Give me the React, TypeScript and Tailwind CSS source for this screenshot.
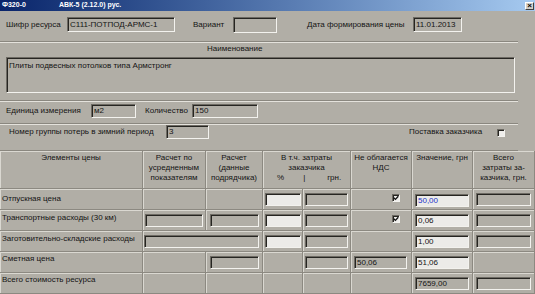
import React from 'react';

const sunken =
  'border border-t-[#6d6a63] border-l-[#6d6a63] border-b-[#f3f2ee] border-r-[#f3f2ee] shadow-[inset_1px_1px_0_#262521]';
const groove = 'w-[518px] border-b border-b-[#8a877f] shadow-[0_1px_0_#e4e2dc]';
const cell = 'border-r border-b border-[#8c8981] shadow-[inset_1px_1px_0_#dad8d1]';

type FieldProps = {
  value?: string;
  white?: boolean;
  blue?: boolean;
  className?: string;
};

function Field({ value = '', white = false, blue = false, className = '' }: FieldProps) {
  return (
    <div
      className={`${sunken} ${white ? 'bg-[#ecebe8]' : 'bg-[#b1aea6]'} ${
        blue ? 'text-[#2433c8]' : 'text-[#141414]'
      } flex items-center pl-[2px] leading-none whitespace-nowrap overflow-hidden ${className}`}
    >
      {value}
    </div>
  );
}

function Check({ checked = false, className = '' }: { checked?: boolean; className?: string }) {
  return (
    <div className={`w-[8px] h-[8px] ${sunken} bg-[#efeeeb] flex items-center justify-center ${className}`}>
      {checked && (
        <svg viewBox="0 0 6 6" className="w-[6px] h-[6px]">
          <path d="M0.8 2.8 L2.4 4.4 L5.3 1.2" stroke="#111" strokeWidth="1.3" fill="none" />
        </svg>
      )}
    </div>
  );
}

function Head({ children, span = false }: { children: React.ReactNode; span?: boolean }) {
  return (
    <div className={`${cell} ${span ? 'col-span-2' : ''} text-center leading-[10px] pt-[2px] whitespace-nowrap`}>
      {children}
    </div>
  );
}

function C({ children, span = false }: { children?: React.ReactNode; span?: boolean }) {
  return <div className={`${cell} ${span ? 'col-span-2' : ''} flex items-start`}>{children}</div>;
}

export default function App() {
  return (
    <div className="w-[535px] h-[294px] overflow-hidden bg-[#b1aea6] text-[#141414] text-[8px] font-['Liberation_Sans',Arial,sans-serif]">
      {/* title bar */}
      <div className="h-[11px] flex items-center bg-linear-to-r from-[#0a246a] to-[#a6caf0] text-white font-bold text-[7px]">
        <span className="ml-[2px]">Ф320-0</span>
        <span className="ml-[33px]">АВК-5 (2.12.0) рус.</span>
        <div className="ml-auto mr-[1px] w-[9px] h-[8px] bg-[#d4d0c8] border border-t-white border-l-white border-b-[#404040] border-r-[#404040] flex items-center justify-center text-black text-[8px] leading-none">
          ×
        </div>
      </div>

      {/* resource code */}
      <div className={`${groove} h-[31px] pt-[6px]`}>
        <div className="flex items-center h-[15px]">
          <span className="ml-[6px] w-[61px]">Шифр ресурса</span>
          <Field value="С111-ПОТПОД-АРМС-1" className="w-[108px] h-[15px]" />
          <span className="ml-[18px] w-[40px]">Вариант</span>
          <Field className="w-[44px] h-[16px]" />
          <span className="ml-[30px] w-[106px]">Дата формирования цены</span>
          <Field value="11.01.2013" className="w-[49px] h-[15px]" />
        </div>
      </div>

      {/* name */}
      <div className={`${groove} h-[59px] pt-[2px]`}>
        <div className="ml-[207px] leading-[10px]">Наименование</div>
        <div className={`${sunken} bg-[#b1aea6] ml-[6px] mt-[3px] w-[509px] h-[36px] pl-[2px] pt-[3px] leading-[10px]`}>
          Плиты подвесных потолков типа Армстронг
        </div>
      </div>

      {/* unit / quantity */}
      <div className={`${groove} h-[23px] pt-[3px]`}>
        <div className="flex items-center h-[14px]">
          <span className="ml-[6px] w-[85px]">Единица измерения</span>
          <Field value="м2" className="w-[45px] h-[14px]" />
          <span className="ml-[9px] w-[47px]">Количество</span>
          <Field value="150" className="w-[66px] h-[14px]" />
        </div>
      </div>

      {/* loss group */}
      <div className={`${groove} h-[27px] pt-[1px]`}>
        <div className="flex items-center h-[14px]">
          <span className="ml-[9px] w-[157px]">Номер группы потерь в зимний период</span>
          <Field value="3" className="w-[43px] h-[14px]" />
          <span className="ml-[200px] w-[88px]">Поставка заказчика</span>
          <Check className="mt-[1px]" />
        </div>
      </div>

      {/* price table */}
      <div className="grid grid-cols-[143px_63px_57px_40px_48px_61px_61px_62px] grid-rows-[38px_21px_21px_21px_21px_21px]">
        <Head>Элементы цены</Head>
        <Head>
          Расчет по
          <br />
          усредненным
          <br />
          показателям
        </Head>
        <Head>
          Расчет
          <br />
          (данные
          <br />
          подрядчика)
        </Head>
        <Head span>
          В т.ч. затраты
          <br />
          заказчика
          <div className="flex text-left">
            <span className="ml-[14px]">%</span>
            <span className="ml-[19px]">|</span>
            <span className="ml-[22px]">грн.</span>
          </div>
        </Head>
        <Head>
          Не облагается
          <br />
          НДС
        </Head>
        <Head>Значение, грн</Head>
        <Head>
          Всего
          <br />
          затраты за-
          <br />
          казчика, грн.
        </Head>

        {/* Отпускная цена */}
        <C>
          <span className="ml-[2px] mt-[5px] leading-[10px]">Отпускная цена</span>
        </C>
        <C />
        <C />
        <C>
          <Field white className="ml-[2px] mt-[4px] w-[36px] h-[13px]" />
        </C>
        <C>
          <Field className="ml-[2px] mt-[4px] w-[43px] h-[13px]" />
        </C>
        <C>
          <Check checked className="ml-[41px] mt-[5px]" />
        </C>
        <C>
          <Field white blue value="50,00" className="ml-[3px] mt-[5px] w-[54px] h-[13px]" />
        </C>
        <C>
          <Field className="ml-[3px] mt-[4px] w-[55px] h-[13px]" />
        </C>

        {/* Транспортные расходы */}
        <C>
          <span className="ml-[2px] mt-[3px] leading-[10px]">Транспортные расходы (30 км)</span>
        </C>
        <C>
          <Field className="ml-[2px] mt-[4px] w-[58px] h-[13px]" />
        </C>
        <C>
          <Field className="ml-[4px] mt-[4px] w-[49px] h-[13px]" />
        </C>
        <C>
          <Field white className="ml-[2px] mt-[4px] w-[36px] h-[13px]" />
        </C>
        <C>
          <Field className="ml-[2px] mt-[4px] w-[43px] h-[13px]" />
        </C>
        <C>
          <Check checked className="ml-[41px] mt-[5px]" />
        </C>
        <C>
          <Field white value="0,06" className="ml-[3px] mt-[4px] w-[54px] h-[13px]" />
        </C>
        <C>
          <Field className="ml-[3px] mt-[4px] w-[55px] h-[13px]" />
        </C>

        {/* Заготовительно-складские расходы */}
        <C>
          <span className="ml-[2px] mt-[3px] leading-[10px]">Заготовительно-складские расходы</span>
        </C>
        <C span>
          <Field className="ml-[1px] mt-[4px] w-[115px] h-[13px]" />
        </C>
        <C>
          <Field white className="ml-[2px] mt-[4px] w-[36px] h-[13px]" />
        </C>
        <C>
          <Field className="ml-[2px] mt-[4px] w-[43px] h-[13px]" />
        </C>
        <C />
        <C>
          <Field white value="1,00" className="ml-[3px] mt-[4px] w-[54px] h-[13px]" />
        </C>
        <C>
          <Field className="ml-[3px] mt-[4px] w-[55px] h-[13px]" />
        </C>

        {/* Сметная цена */}
        <C>
          <span className="ml-[2px] mt-[2px] leading-[10px]">Сметная цена</span>
        </C>
        <C />
        <C>
          <Field className="ml-[4px] mt-[4px] w-[49px] h-[13px]" />
        </C>
        <C />
        <C>
          <Field className="ml-[2px] mt-[4px] w-[43px] h-[13px]" />
        </C>
        <C>
          <Field value="50,06" className="ml-[3px] mt-[4px] w-[53px] h-[13px]" />
        </C>
        <C>
          <Field white value="51,06" className="ml-[3px] mt-[4px] w-[54px] h-[13px]" />
        </C>
        <C />

        {/* Всего стоимость ресурса */}
        <C>
          <span className="ml-[2px] mt-[2px] leading-[10px]">Всего стоимость ресурса</span>
        </C>
        <C />
        <C />
        <C />
        <C />
        <C />
        <C>
          <Field value="7659,00" className="ml-[3px] mt-[4px] w-[54px] h-[13px]" />
        </C>
        <C>
          <Field className="ml-[3px] mt-[4px] w-[55px] h-[13px]" />
        </C>
      </div>
    </div>
  );
}
